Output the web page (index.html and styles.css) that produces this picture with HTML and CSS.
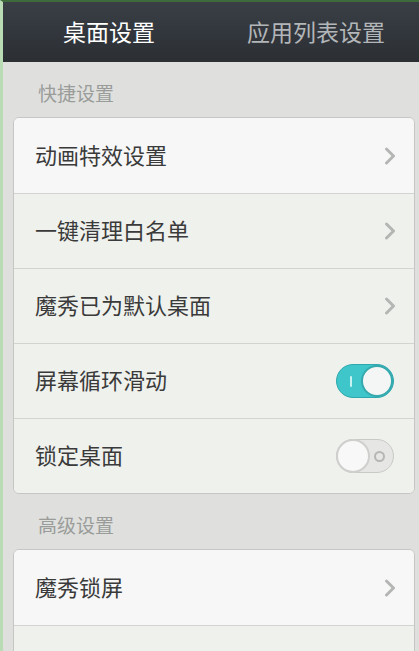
FILE: index.html
```html
<!DOCTYPE html>
<html lang="zh">
<head>
<meta charset="utf-8">
<link rel="stylesheet" href="styles.css">
</head>
<body>
<div class="screen">
  <header class="tabs">
    <div class="tab active">桌面设置</div>
    <div class="tab">应用列表设置</div>
  </header>
  <main class="content">
    <div class="section-title">快捷设置</div>
    <div class="card">
      <div class="row row-light"><span class="label">动画特效设置</span><svg class="chev" viewBox="0 0 12 18" width="12" height="18"><path d="M2.5 2 L9.5 9 L2.5 16" fill="none" stroke="#b4b6b4" stroke-width="3" stroke-linecap="round" stroke-linejoin="round"/></svg></div>
      <div class="row"><span class="label">一键清理白名单</span><svg class="chev" viewBox="0 0 12 18" width="12" height="18"><path d="M2.5 2 L9.5 9 L2.5 16" fill="none" stroke="#b4b6b4" stroke-width="3" stroke-linecap="round" stroke-linejoin="round"/></svg></div>
      <div class="row"><span class="label">魔秀已为默认桌面</span><svg class="chev" viewBox="0 0 12 18" width="12" height="18"><path d="M2.5 2 L9.5 9 L2.5 16" fill="none" stroke="#b4b6b4" stroke-width="3" stroke-linecap="round" stroke-linejoin="round"/></svg></div>
      <div class="row"><span class="label">屏幕循环滑动</span><span class="toggle on"><span class="bar"></span><span class="knob"></span></span></div>
      <div class="row"><span class="label">锁定桌面</span><span class="toggle off"><span class="knob"></span><span class="ring"></span></span></div>
    </div>
    <div class="section-title">高级设置</div>
    <div class="card">
      <div class="row row-light"><span class="label">魔秀锁屏</span><svg class="chev" viewBox="0 0 12 18" width="12" height="18"><path d="M2.5 2 L9.5 9 L2.5 16" fill="none" stroke="#b4b6b4" stroke-width="3" stroke-linecap="round" stroke-linejoin="round"/></svg></div>
      <div class="row"><span class="label"></span></div>
    </div>
  </main>
</div>
</body>
</html>
```

FILE: styles.css
```css
* { box-sizing: border-box; }
html, body { margin: 0; padding: 0; }
body {
  width: 419px;
  height: 651px;
  overflow: hidden;
  font-family: "Noto Sans CJK SC", "Noto Sans", sans-serif;
  background: #dfe0de;
}
.screen {
  height: 651px;
  overflow: hidden;
  border-left: 3px solid #b9dcb4;
  border-top: 2px solid #3f6a3c;
  background: #dfe0de;
}
.tabs {
  height: 60px;
  display: flex;
  background: linear-gradient(#3a3f46, #2b2f34);
  align-items: center;
}
.tab {
  flex: 1;
  text-align: center;
  font-size: 23px;
  line-height: 30px;
  color: #b3b6b8;
  padding-bottom: 2px;
}
.tab.active {
  flex: 0 0 212px;
  color: #ffffff;
}
.tab:not(.active) {
  padding-right: 2px;
}
.content {
  padding: 0 4px 0 10px;
}
.section-title {
  font-size: 19px;
  line-height: 26px;
  color: #9a9c9a;
  padding: 18px 0 0 25px;
  height: 55px;
}
.card {
  background: #f1f2f0;
  border: 1px solid #c6c7c5;
  border-radius: 6px;
  overflow: hidden;
}
.row {
  height: 75px;
  display: flex;
  align-items: center;
  justify-content: space-between;
  padding: 0 20px 0 21px;
  border-top: 1px solid #d3d4d2;
  background: #eff1ed;
}
.row:first-child { border-top: none; }
.row-light { background: #f6f7f6; }
.label {
  font-size: 22px;
  line-height: 30px;
  color: #3a3a3a;
  padding-bottom: 4px;
}
.chev { margin-right: -2px; }
.toggle {
  position: relative;
  width: 58px;
  height: 34px;
  border-radius: 17px;
}
.toggle.on {
  background: #3ec6cb;
  border: 1px solid #2fa8ad;
}
.toggle.on .bar {
  position: absolute;
  left: 13px;
  top: 11px;
  width: 2px;
  height: 11px;
  background: #c9f2f3;
  border-radius: 1px;
}
.toggle.on .knob {
  position: absolute;
  right: 0px;
  top: 0px;
  width: 32px;
  height: 32px;
  border-radius: 50%;
  background: #f4f6f5;
  border: 2px solid #35a9ad;
}
.toggle.off {
  background: #e6e7e5;
  border: 1px solid #c9cac8;
}
.toggle.off .knob {
  position: absolute;
  left: -1px;
  top: -1px;
  width: 34px;
  height: 34px;
  border-radius: 50%;
  background: #f7f8f7;
  border: 2px solid #cfd0ce;
}
.toggle.off .ring {
  position: absolute;
  right: 8px;
  top: 11px;
  width: 11px;
  height: 11px;
  border-radius: 50%;
  border: 2px solid #b6b7b5;
}
```
